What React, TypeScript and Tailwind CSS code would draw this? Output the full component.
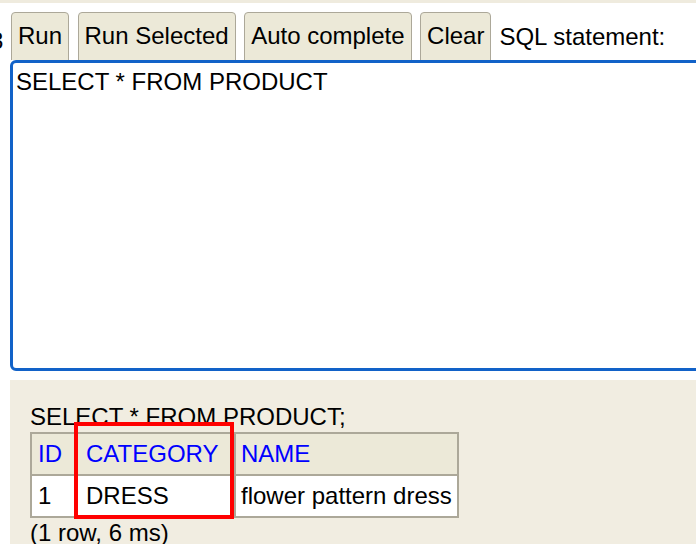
import React from 'react';

const buttons = ['Run', 'Run Selected', 'Auto complete', 'Clear'];

export default function App() {
  return (
    <div
      className="relative w-[696px] h-[544px] overflow-hidden bg-white text-black"
      style={{ fontFamily: '"Liberation Sans", Arial, sans-serif' }}
    >
      <div className="h-[3px] bg-[#efebde]" />

      {/* toolbar */}
      <div className="flex items-start h-[57px] pt-[9px] overflow-hidden text-[24px] leading-none">
        <span className="w-[3px] overflow-hidden mt-[17px] shrink-0">
          <span className="inline-block -ml-[10px]">3</span>
        </span>
        <div className="flex gap-[8.5px] ml-[8px]">
          {buttons.map((b) => (
            <button
              key={b}
              className="h-[56px] pb-[8px] px-[6px] rounded-[4px] border border-[#aca899] bg-[#ece9d8] text-[24px] leading-none"
            >
              {b}
            </button>
          ))}
        </div>
        <span className="ml-[8px] mt-[13px] whitespace-nowrap">SQL statement:</span>
      </div>

      {/* editor */}
      <div className="ml-[10px] -mr-[20px] h-[311px] border-[3px] border-[#1262c8] rounded-[6px] px-[3px] pt-[5px] text-[24px] leading-[28px]">
        SELECT * FROM PRODUCT
      </div>

      {/* result */}
      <div className="ml-[10px] mt-[9px] h-[200px] bg-[#f1ede1] pl-[20px] pt-[22px] text-[24px]">
        <div className="leading-[30px]">SELECT * FROM PRODUCT;</div>
        <table className="table-fixed w-[427px] border-collapse border-2 border-[#aca899] leading-[28px]">
          <colgroup>
            <col className="w-[46px]" />
            <col className="w-[158px]" />
            <col className="w-[223px]" />
          </colgroup>
          <thead>
            <tr className="bg-[#ece9d8] text-[#0000ff] h-[42px]">
              <th className="font-normal text-left pl-[6px] border-2 border-[#aca899]">ID</th>
              <th className="font-normal text-left pl-[8px] border-2 border-[#aca899]">CATEGORY</th>
              <th className="font-normal text-left pl-[5px] border-2 border-[#aca899]">NAME</th>
            </tr>
          </thead>
          <tbody>
            <tr className="bg-white h-[42px]">
              <td className="pl-[6px] border-2 border-[#aca899]">1</td>
              <td className="pl-[8px] border-2 border-[#aca899]">DRESS</td>
              <td className="pl-[5px] border-2 border-[#aca899] whitespace-nowrap">flower pattern dress</td>
            </tr>
          </tbody>
        </table>
        <div className="leading-[30px]">(1 row, 6 ms)</div>
      </div>

      {/* highlight */}
      <div className="absolute left-[74px] top-[422px] w-[160px] h-[97px] border-4 border-[#ff0000]" />
    </div>
  );
}
